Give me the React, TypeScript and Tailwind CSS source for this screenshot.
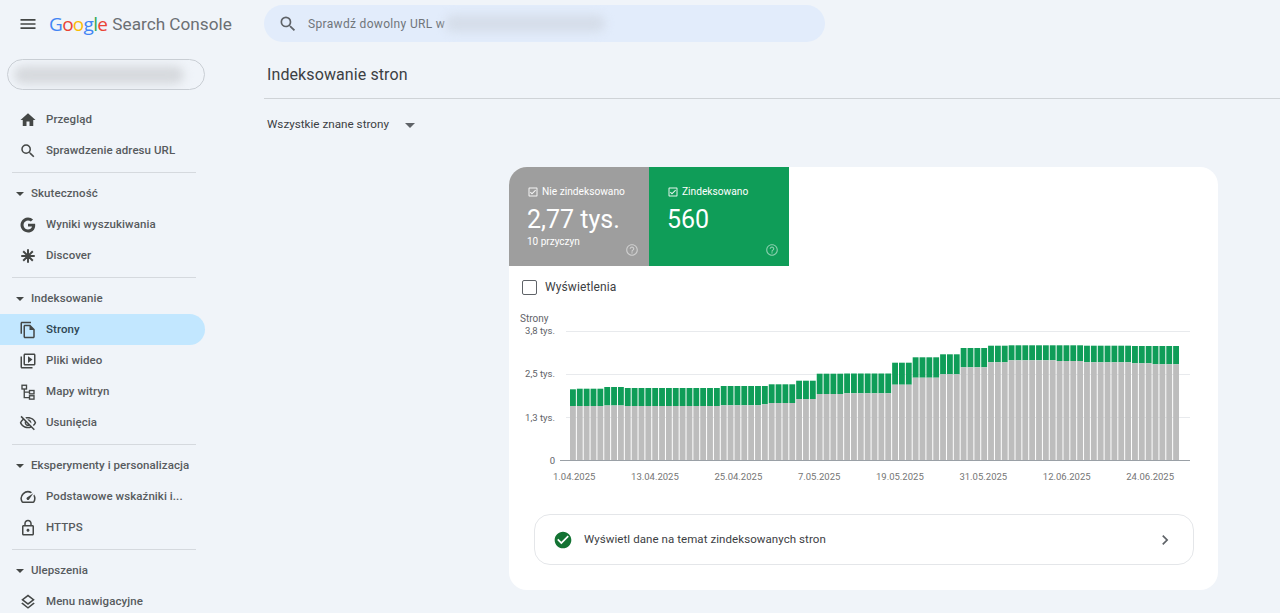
import type { ReactNode } from "react";
import {
  MdArrowDropDown,
  MdCheckCircle,
  MdChevronRight,
  MdHelpOutline,
  MdHome,
  MdMenu,
  MdOutlineCheckBox,
  MdOutlineFileCopy,
  MdOutlineLayers,
  MdOutlineLock,
  MdOutlineSpeed,
  MdOutlineVideoLibrary,
  MdOutlineVisibilityOff,
  MdSearch,
} from "react-icons/md";
import { RiGoogleFill } from "react-icons/ri";

const DiscoverIcon = () => (
  <svg viewBox="0 0 24 24" className="h-[18px] w-[18px]" fill="none" stroke="currentColor" strokeWidth="2.6">
    <path d="M12 3v18M3 12h18M5.6 5.6l12.8 12.8M18.4 5.6L5.6 18.4" />
  </svg>
);

const SitemapIcon = () => (
  <svg viewBox="0 0 24 24" className="h-[18px] w-[18px]" fill="none" stroke="currentColor" strokeWidth="1.8">
    <rect x="4" y="3" width="6" height="5" />
    <rect x="14" y="10" width="6" height="4.5" />
    <rect x="14" y="17" width="6" height="4.5" />
    <path d="M7 8v11.5h7M7 12.2h7" />
  </svg>
);

const iconClass = "h-[18px] w-[18px]";

const Item = ({ icon, label, active }: { icon: ReactNode; label: string; active?: boolean }) => (
  <div
    className={
      "flex h-[31px] w-[205px] items-center gap-[9px] rounded-r-full pl-[19px] " +
      (active ? "bg-[#c2e7ff] text-[#2f4654]" : "text-[#575b5e]")
    }
  >
    <span className="flex w-[18px] justify-center text-[#444746]">{icon}</span>
    <span className="text-[11.5px] font-medium tracking-[0.07px]">{label}</span>
  </div>
);

const Section = ({ label }: { label: string }) => (
  <div className="flex h-[31px] items-center pl-[16px] text-[#575b5e]">
    <span className="mr-[7px] h-0 w-0 border-x-[4px] border-t-[4px] border-x-transparent border-t-[#444746]" />
    <span className="text-[11.5px] font-medium tracking-[0.07px]">{label}</span>
  </div>
);

const Divider = () => <div className="my-[5.5px] ml-[12px] h-px w-[184px] bg-[#d5d9de]" />;

const Sidebar = () => (
  <aside className="w-[264px] shrink-0">
    <div className="ml-[7px] mt-[10px] flex h-[31px] w-[198px] items-center overflow-hidden rounded-full border border-[#c9ced4] px-[6px]">
      <div className="h-[18px] w-[170px] rounded-full bg-[#d6d9dd] blur-[5px]" />
    </div>
    <div className="mt-[14px]">
      <Item icon={<MdHome className={iconClass} />} label="Przegląd" />
      <Item icon={<MdSearch className={iconClass} />} label="Sprawdzenie adresu URL" />
      <Divider />
      <Section label="Skuteczność" />
      <Item icon={<RiGoogleFill className={iconClass} />} label="Wyniki wyszukiwania" />
      <Item icon={<DiscoverIcon />} label="Discover" />
      <Divider />
      <Section label="Indeksowanie" />
      <Item icon={<MdOutlineFileCopy className={iconClass} />} label="Strony" active />
      <Item icon={<MdOutlineVideoLibrary className={iconClass} />} label="Pliki wideo" />
      <Item icon={<SitemapIcon />} label="Mapy witryn" />
      <Item icon={<MdOutlineVisibilityOff className={iconClass} />} label="Usunięcia" />
      <Divider />
      <Section label="Eksperymenty i personalizacja" />
      <Item icon={<MdOutlineSpeed className={iconClass} />} label="Podstawowe wskaźniki i..." />
      <Item icon={<MdOutlineLock className={iconClass} />} label="HTTPS" />
      <Divider />
      <Section label="Ulepszenia" />
      <Item icon={<MdOutlineLayers className={iconClass} />} label="Menu nawigacyjne" />
    </div>
  </aside>
);

const Header = () => (
  <header className="flex h-[49px] items-center pb-[2px]">
    <div className="flex w-[264px] shrink-0 items-center pl-[18px]">
      <MdMenu className="h-[20px] w-[20px] text-[#444746]" />
      <span className="ml-[11px] mt-[2px] font-['Open_Sans',sans-serif] text-[19px] tracking-[-0.7px]">
        <span className="text-[#4285f4]">G</span>
        <span className="text-[#ea4335]">o</span>
        <span className="text-[#fbbc05]">o</span>
        <span className="text-[#4285f4]">g</span>
        <span className="text-[#34a853]">l</span>
        <span className="text-[#ea4335]">e</span>
      </span>
      <span className="ml-[5px] mt-[2px] text-[17.2px] text-[#6b6f73]">Search Console</span>
    </div>
    <div className="flex h-[37px] w-[561px] items-center rounded-full bg-[#e2ecfb] pl-[14px]">
      <MdSearch className="h-[20px] w-[20px] text-[#5f6368]" />
      <span className="ml-[10px] text-[12px] tracking-[0.33px] text-[#70757a]">Sprawdź dowolny URL w</span>
      <div className="h-[17px] w-[160px] rounded-full bg-[#d5dde9] blur-[5px]" />
    </div>
  </header>
);

const StatTab = ({
  color,
  label,
  value,
  sub,
}: {
  color: string;
  label: string;
  value: string;
  sub?: string;
}) => (
  <div className={"relative h-[99px] w-[140px] pl-[18px] pt-[18px] text-white " + color}>
    <div className="flex items-center gap-[3px] text-[10.2px] leading-[14px]">
      <MdOutlineCheckBox className="h-[12px] w-[12px] opacity-90" />
      {label}
    </div>
    <div className="mt-[4px] text-[25px] leading-[33px]">{value}</div>
    {sub && <div className="mt-[-1px] text-[10px] leading-[13px]">{sub}</div>}
    <MdHelpOutline className="absolute bottom-[9px] right-[10px] h-[14px] w-[14px] opacity-50" />
  </div>
);

// each run: bars in the run, gray top y, green top y (svg coordinates: page y - 325)
const runs: [number, number, number][] = [
  [1, 81, 64.3],
  [4, 81, 63.7],
  [3, 80.5, 62],
  [14, 81, 63],
  [6, 80.3, 61],
  [1, 79.3, 61],
  [4, 78, 59.3],
  [3, 74, 55.7],
  [4, 69, 48.7],
  [7, 68.3, 48.5],
  [3, 59.7, 37.7],
  [4, 52.7, 32.3],
  [3, 49.3, 29.3],
  [4, 42.3, 23],
  [3, 37.3, 20.7],
  [7, 35.3, 20.3],
  [4, 36, 20.3],
  [7, 37.3, 20.7],
  [3, 38.3, 21],
  [4, 39.3, 21],
];

const bars = runs.flatMap(([n, gray, green]) => Array.from({ length: n }, () => ({ gray, green })));
const pitch = 610 / 89;

const Chart = () => (
  <div className="relative ml-[11px] mt-[16px] w-[680px]">
    <div className="text-[10px] leading-[14px] text-[#5f6368]">Strony</div>
    <div className="flex h-[137px] items-stretch">
      <div className="flex h-[140px] w-[35px] shrink-0 flex-col items-end justify-between text-[9.5px] leading-[10px] text-[#5f6368]">
        <span>3,8 tys.</span>
        <span>2,5 tys.</span>
        <span>1,3 tys.</span>
        <span>0</span>
      </div>
      <svg width="641" height="137" className="mt-[-1px] block">
        {[6.5, 49.5, 92.5].map((y) => (
          <line key={y} x1="11" x2="635" y1={y} y2={y} stroke="#e8eaed" />
        ))}
        {bars.map((b, i) => (
          <g key={i}>
            <rect x={15 + i * pitch} y={b.green} width={pitch - 1} height={b.gray - b.green} fill="#0f9d58" />
            <rect x={15 + i * pitch} y={b.gray} width={pitch - 1} height={135 - b.gray} fill="#bdbdbd" />
          </g>
        ))}
        <line x1="5" x2="635" y1="135.5" y2="135.5" stroke="#9aa0a6" />
      </svg>
    </div>
    <div className="ml-[33px] mt-[7px] flex w-[621px] justify-between text-[9.5px] text-[#757575]">
      {["1.04.2025", "13.04.2025", "25.04.2025", "7.05.2025", "19.05.2025", "31.05.2025", "12.06.2025", "24.06.2025"].map(
        (d) => (
          <span key={d}>{d}</span>
        ),
      )}
    </div>
  </div>
);

const Card = () => (
  <section className="ml-[245px] mt-[34px] h-[423px] w-[709px] overflow-hidden rounded-[18px] bg-white">
    <div className="flex">
      <StatTab color="bg-[#9e9e9e]" label="Nie zindeksowano" value="2,77 tys." sub="10 przyczyn" />
      <StatTab color="bg-[#0f9d58]" label="Zindeksowano" value="560" />
    </div>
    <div className="ml-[13px] mt-[12px] flex items-center gap-[8px]">
      <span className="h-[15px] w-[15px] rounded-[2px] border-[1.5px] border-[#5f6368]" />
      <span className="text-[12px] tracking-[0.1px] text-[#3c4043]">Wyświetlenia</span>
    </div>
    <Chart />
    <div className="ml-[25px] mt-[30px] flex h-[51px] w-[660px] items-center rounded-[16px] border border-[#e4e6e9] pl-[18px] pr-[18px]">
      <MdCheckCircle className="h-[20px] w-[20px] text-[#137333]" />
      <span className="ml-[11px] flex-1 text-[11.5px] tracking-[0.07px] text-[#3c4043]">
        Wyświetl dane na temat zindeksowanych stron
      </span>
      <MdChevronRight className="h-[20px] w-[20px] text-[#5f6368]" />
    </div>
  </section>
);

export default function App() {
  return (
    <div className="h-screen overflow-hidden bg-[#f0f4f9] font-['Roboto',sans-serif]">
      <Header />
      <div className="flex">
        <Sidebar />
        <main className="flex-1">
          <h1 className="mt-[15px] pl-[3px] text-[16px] leading-[22px] tracking-[0.1px] text-[#3c4043]">
            Indeksowanie stron
          </h1>
          <div className="mt-[12px] h-px bg-[#cfd3d7]" />
          <div className="mt-[18px] flex h-[16px] items-center pl-[3px] text-[11.7px] text-[#3c4043]">
            Wszystkie znane strony
            <MdArrowDropDown className="ml-[9px] h-[24px] w-[24px] text-[#5f6368]" />
          </div>
          <Card />
        </main>
      </div>
    </div>
  );
}
